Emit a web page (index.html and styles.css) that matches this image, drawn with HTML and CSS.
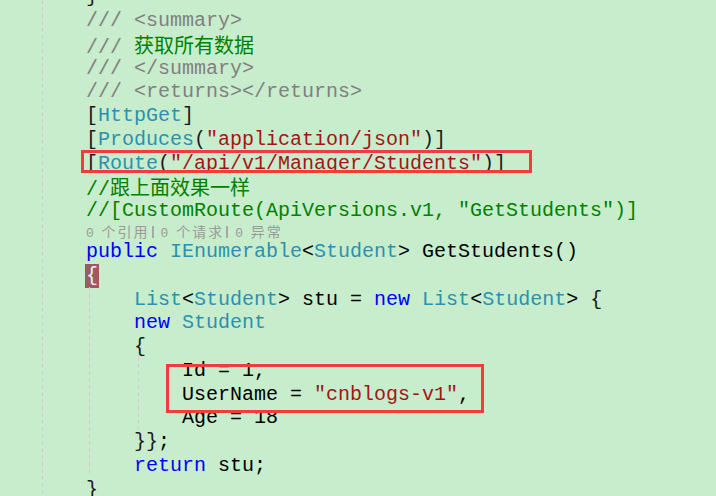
FILE: index.html
```html
<!DOCTYPE html>
<html lang="zh-CN">
<head>
    <meta charset="UTF-8">
    <title>StudentsController</title>
    <link rel="stylesheet" href="styles.css">
</head>
<body>
    <div class="editor">
        <div class="guide guide-outer"></div>
        <div class="guide guide-method"></div>
        <div class="guide guide-init"></div>

        <div class="code">
            <div class="ln"><span class="p">}</span></div>
            <div class="ln"><span class="doc">/// &lt;summary&gt;</span></div>
            <div class="ln"><span class="doc">/// </span><span class="cm cjk">获取所有数据</span></div>
            <div class="ln"><span class="doc">/// &lt;/summary&gt;</span></div>
            <div class="ln"><span class="doc">/// &lt;returns&gt;&lt;/returns&gt;</span></div>
            <div class="ln"><span class="p">[</span><span class="ty">HttpGet</span><span class="p">]</span></div>
            <div class="ln"><span class="p">[</span><span class="ty">Produces</span><span class="p">(</span><span class="str">"application/json"</span><span class="p">)]</span></div>
            <div class="ln"><span class="p">[</span><span class="ty">Route</span><span class="p">(</span><span class="str">"/api/v1/Manager/Students"</span><span class="p">)]</span></div>
            <div class="ln"><span class="cm">//<span class="cjk">跟上面效果一样</span></span></div>
            <div class="ln"><span class="cm">//[CustomRoute(ApiVersions.v1, "GetStudents")]</span></div>
            <div class="lens">0 <span class="cjk">个引用</span><span class="sep"></span>0 <span class="cjk">个请求</span><span class="sep"></span>0 <span class="cjk">异常</span></div>
            <div class="ln"><span class="kw">public</span> <span class="ty">IEnumerable</span>&lt;<span class="ty">Student</span>&gt; GetStudents()</div>
            <div class="ln"><span class="match">{</span></div>
            <div class="ln">    <span class="ty">List</span>&lt;<span class="ty">Student</span>&gt; stu = <span class="kw">new</span> <span class="ty">List</span>&lt;<span class="ty">Student</span>&gt; <span class="p">{</span></div>
            <div class="ln">    <span class="kw">new</span> <span class="ty">Student</span></div>
            <div class="ln">    <span class="p">{</span></div>
            <div class="ln">        Id = 1,</div>
            <div class="ln">        UserName = <span class="str">"cnblogs-v1"</span>,</div>
            <div class="ln">        Age = 18</div>
            <div class="ln">    <span class="p">}}</span>;</div>
            <div class="ln">    <span class="kw">return</span> stu;</div>
            <div class="ln"><span class="p">}</span></div>
        </div>

        <!-- red annotation boxes drawn over the code -->
        <div class="mark mark-route"></div>
        <div class="mark mark-user"></div>
    </div>
</body>
</html>
```

FILE: styles.css
```css
body {
    margin: 0;
    padding: 0;
    width: 716px;
    height: 496px;
    overflow: hidden;
    background-color: #c7edcc;
}

.editor {
    position: relative;
    width: 716px;
    height: 496px;
    overflow: hidden;
}

.code {
    margin-top: -14.6px;
    padding-left: 86px;
    font-family: "Liberation Mono", "Courier New", "Noto Sans CJK SC", monospace;
    font-size: 20px;
    color: #000;
}

.ln {
    height: 23.75px;
    line-height: 23.75px;
    white-space: pre;
}

.cjk {
    font-family: "Noto Sans CJK SC", sans-serif;
}

/* syntax colours */
.doc { color: #808080; }
.cm { color: #008000; }
.ty { color: #2b91af; }
.str { color: #a31515; }
.kw { color: #0000ff; }
.p { color: #1a1a1a; }

.match {
    display: inline-block;
    width: 13px;
    height: 24px;
    line-height: 24px;
    margin-left: -1px;
    padding-left: 1px;
    background-color: #9e5a5e;
    color: #eef0ff;
}

/* code lens line */
.lens {
    height: 17.25px;
    line-height: 17.25px;
    font-size: 13px;
    color: #9a9a9a;
    white-space: pre;
}

.lens .cjk {
    font-size: 14px;
    letter-spacing: 2px;
}

.sep {
    display: inline-block;
    width: 2px;
    height: 12px;
    margin: 0 7px 0 2px;
    vertical-align: -1px;
    background-color: #a8a8a8;
}

/* indent guides */
.guide {
    position: absolute;
    width: 1px;
    background-image: repeating-linear-gradient(to bottom, #d6c8ce 0, #d6c8ce 4px, transparent 4px, transparent 7px);
}

.guide-outer {
    left: 42px;
    top: 0;
    height: 496px;
}

.guide-method {
    left: 89px;
    top: 287px;
    height: 188px;
}

.guide-init {
    left: 138px;
    top: 357px;
    height: 72px;
}

/* annotations */
.mark {
    position: absolute;
    border: 3px solid #f23c3c;
    box-sizing: border-box;
}

.mark-route {
    left: 81px;
    top: 150px;
    width: 451px;
    height: 23px;
}

.mark-user {
    left: 166px;
    top: 364px;
    width: 318px;
    height: 49px;
}
```
